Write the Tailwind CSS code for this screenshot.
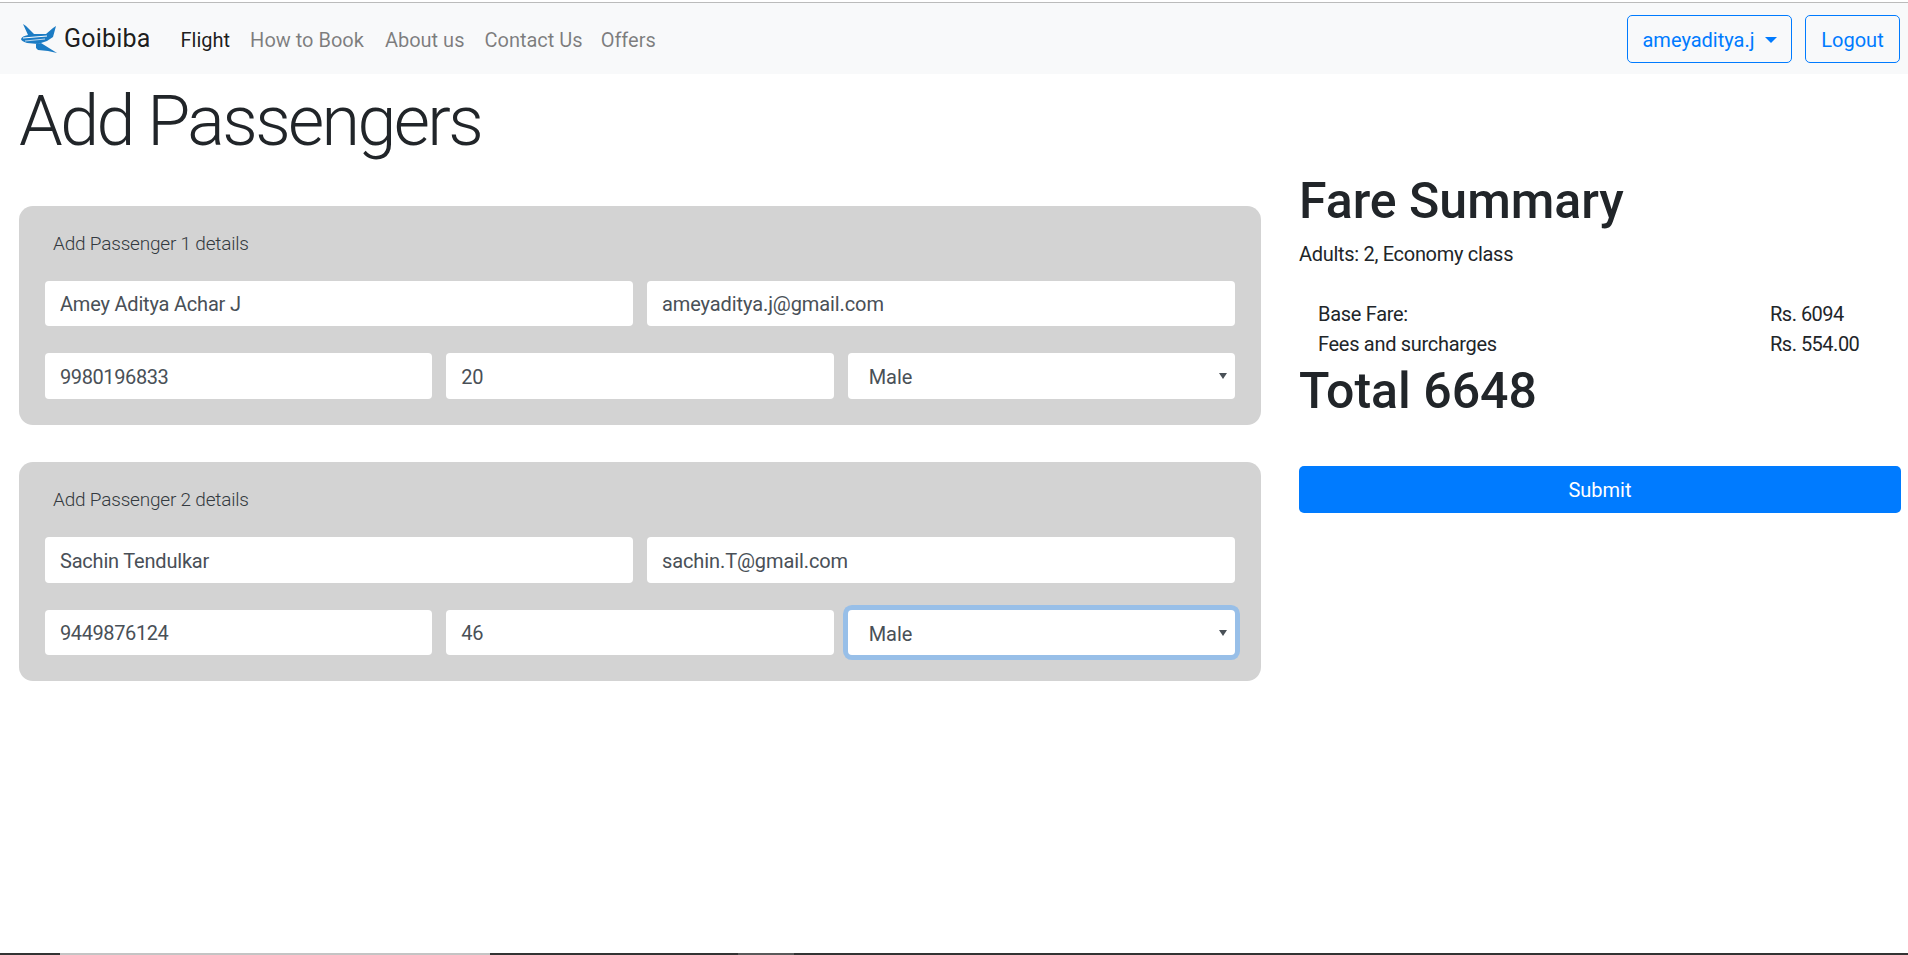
<!DOCTYPE html>
<html lang="en">
<head>
    <meta charset="UTF-8">
    <meta name="viewport" content="width=device-width, initial-scale=1.0">
    <title>Add Passengers - Goibiba</title>
    <script src="https://cdn.jsdelivr.net/npm/@tailwindcss/browser@4"></script>
</head>
<body class="bg-white font-['Roboto',sans-serif] text-[#212529]">
<div class="flex flex-col h-[955px] overflow-hidden">
    <div class="h-[2px] bg-white"></div>
    <div class="h-px bg-[#bbbbbb]"></div>

    <!-- Navbar -->
    <nav class="h-[71px] bg-[#f8f9fa] flex items-center pl-[21px] pr-[8px]">
        <svg class="w-[36px] h-[30px]" viewBox="0 0 36 30" fill="#1c7cc4">
            <path d="M2 0 L5 2 L13 10 L25 10 L32 4 L35 2 L32 13 L26 17 L17 20 L6 19 Q0 17 0 15 Q1 12 7 11 Z"/>
            <path d="M2 14 L26 12" stroke="#ffffff" stroke-width="1" fill="none"/>
            <path d="M4 17 L24 15" stroke="#ffffff" stroke-width="0.7" fill="none"/>
            <path d="M15 20 L20 19 L36 29 L27 27 L17 26 L15 24 Z"/>
        </svg>
        <a class="ml-[7px] text-[25px] text-black/90 pt-[1px] tracking-[0.2px]">Goibiba</a>
        <ul class="flex ml-[30px] pt-[2px] text-[20px] text-black/50">
            <li class="mr-[20px] text-black/90">Flight</li>
            <li class="mr-[21px]">How to Book</li>
            <li class="mr-[20px]">About us</li>
            <li class="mr-[18px]">Contact Us</li>
            <li>Offers</li>
        </ul>
        <div class="ml-auto flex gap-[13px]">
            <button class="w-[165px] h-[48px] border border-[#007bff] rounded-[5px] text-[#007bff] text-[20px] pt-[2px] flex items-center justify-center gap-[10px]">
                ameyaditya.j
                <span class="w-0 h-0 border-x-[6px] border-x-transparent border-t-[6px] border-t-[#007bff]"></span>
            </button>
            <button class="w-[95px] h-[48px] border border-[#007bff] rounded-[5px] text-[#007bff] text-[20px] pt-[2px]">Logout</button>
        </div>
    </nav>

    <main class="flex-1 flex pl-[19px] pr-[7px]">
        <!-- Passenger forms -->
        <div class="w-[1242px]">
            <h1 class="h-[132px] text-[70px] font-light leading-[94px] tracking-[-2.6px]">Add Passengers</h1>

            <section class="h-[219px] bg-[#d3d3d3] rounded-[14px] px-[26px] mb-[37px]">
                <div class="h-[75px] flex items-center pl-[8px] pt-[2px] text-[19px] font-light text-[#343a40] tracking-[-0.2px]">Add Passenger 1 details</div>
                <div class="grid grid-cols-2 gap-[14px] mb-[27px]">
                    <input class="h-[45px] bg-white rounded-[4px] px-[15px] pt-[1px] text-[20px] text-[#495057] tracking-[-0.2px]" value="Amey Aditya Achar J">
                    <input class="h-[45px] bg-white rounded-[4px] px-[15px] pt-[1px] text-[20px] text-[#495057] tracking-[-0.1px]" value="ameyaditya.j@gmail.com">
                </div>
                <div class="grid grid-cols-3 gap-[14px]">
                    <input class="h-[46px] bg-white rounded-[4px] px-[15px] pt-[2px] text-[20px] text-[#495057] tracking-[-0.4px]" value="9980196833">
                    <input class="h-[46px] bg-white rounded-[4px] px-[15px] pt-[2px] text-[20px] text-[#495057] tracking-[-0.4px]" value="20">
                    <div class="relative">
                        <select class="w-full h-[46px] appearance-none bg-white rounded-[4px] pl-[21px] pt-[1px] text-[20px] text-[#495057]"><option>Male</option></select>
                        <span class="absolute right-[8px] top-[20px] w-0 h-0 border-x-[4px] border-x-transparent border-t-[6px] border-t-[#495057]"></span>
                    </div>
                </div>
            </section>

            <section class="h-[219px] bg-[#d3d3d3] rounded-[14px] px-[26px]">
                <div class="h-[75px] flex items-center pl-[8px] pt-[2px] text-[19px] font-light text-[#343a40] tracking-[-0.2px]">Add Passenger 2 details</div>
                <div class="grid grid-cols-2 gap-[14px] mb-[27px]">
                    <input class="h-[46px] bg-white rounded-[4px] px-[15px] pt-[2px] text-[20px] text-[#495057] tracking-[-0.2px]" value="Sachin Tendulkar">
                    <input class="h-[46px] bg-white rounded-[4px] px-[15px] pt-[2px] text-[20px] text-[#495057] tracking-[-0.1px]" value="sachin.T@gmail.com">
                </div>
                <div class="grid grid-cols-3 gap-[14px]">
                    <input class="h-[45px] bg-white rounded-[4px] px-[15px] pt-[1px] text-[20px] text-[#495057] tracking-[-0.4px]" value="9449876124">
                    <input class="h-[45px] bg-white rounded-[4px] px-[15px] pt-[1px] text-[20px] text-[#495057] tracking-[-0.4px]" value="46">
                    <div class="relative">
                        <select class="w-full h-[45px] appearance-none bg-white rounded-[4px] pl-[21px] pt-[2px] text-[20px] text-[#495057] ring-[5px] ring-[#98bfe8]"><option>Male</option></select>
                        <span class="absolute right-[8px] top-[20px] w-0 h-0 border-x-[4px] border-x-transparent border-t-[6px] border-t-[#495057]"></span>
                    </div>
                </div>
            </section>
        </div>

        <!-- Fare summary -->
        <aside class="w-[602px] ml-[38px] pt-[94px]">
            <h2 class="text-[50px] font-medium leading-[64px] pt-[1px] -mb-[1px]">Fare Summary</h2>
            <p class="mt-[10px] text-[20px] leading-[24px] tracking-[-0.3px]">Adults: 2, Economy class</p>
            <div class="mt-[33px] pl-[19px] text-[20px] leading-[30px] tracking-[-0.3px]">
                <div class="flex"><span class="w-[452px]">Base Fare:</span><span class="tracking-[-0.5px]">Rs. 6094</span></div>
                <div class="flex"><span class="w-[452px]">Fees and surcharges</span><span class="tracking-[-0.5px]">Rs. 554.00</span></div>
            </div>
            <div class="text-[50px] font-medium leading-[64px]">Total 6648</div>
            <button class="mt-[43px] w-full h-[47px] bg-[#007bff] rounded-[5px] text-white text-[20px]">Submit</button>
        </aside>
    </main>

    <!-- Window edge -->
    <div class="h-[2px] flex bg-[#333333]">
        <div class="w-[60px]"></div>
        <div class="w-[430px] bg-[#c4c4c4]"></div>
        <div class="w-[248px]"></div>
        <div class="w-[56px] bg-[#5a5a5a]"></div>
    </div>
</div>
</body>
</html>
